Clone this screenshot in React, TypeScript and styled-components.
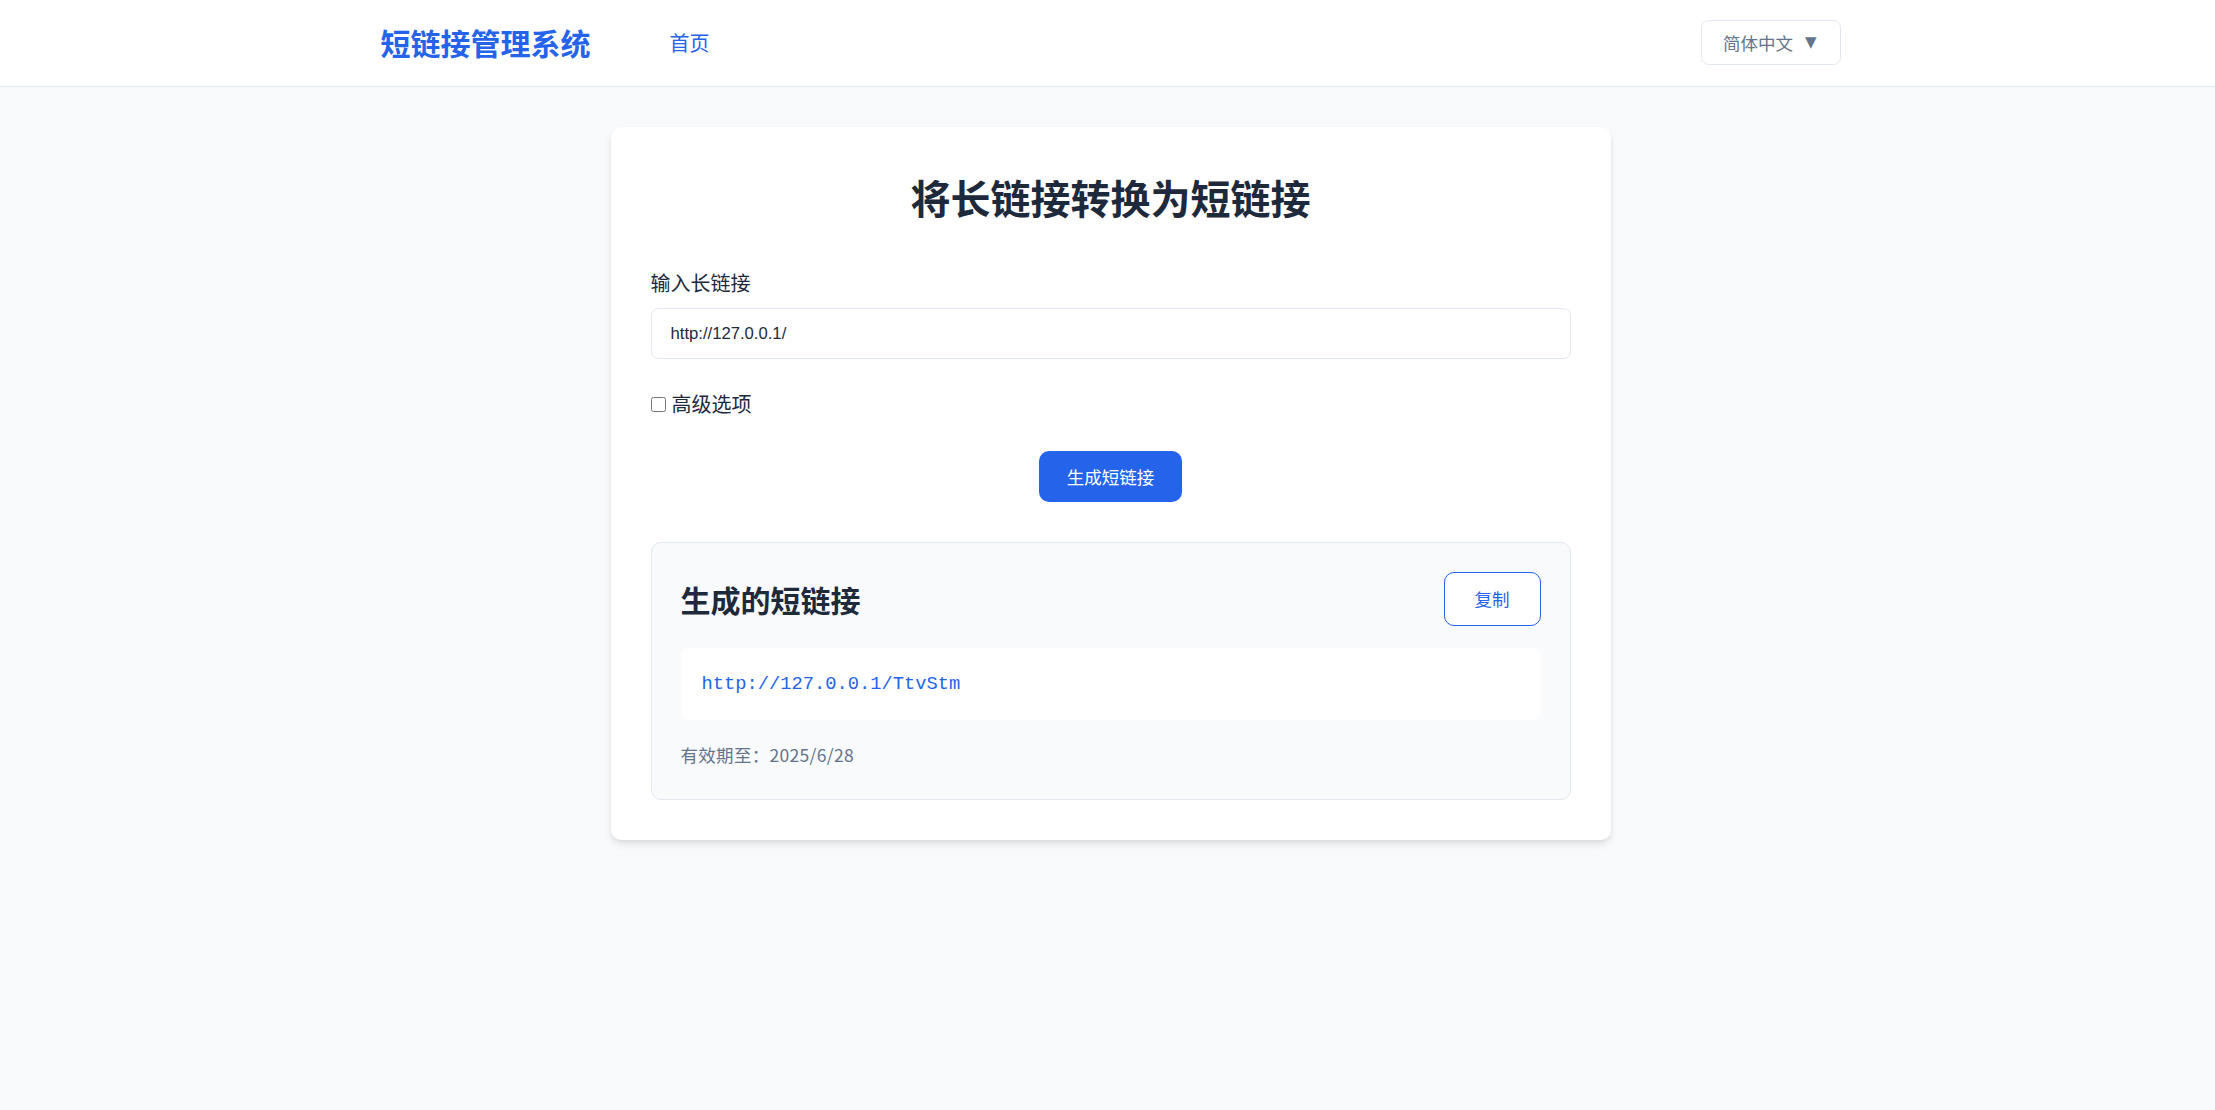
import React from "react";
import styled, { createGlobalStyle } from "styled-components";

const GlobalStyle = createGlobalStyle`
  html, body {
    margin: 0;
    padding: 0;
    background: #f8fafc;
    font-family: "Noto Sans CJK SC", "Noto Sans", sans-serif;
    color: #1e293b;
  }
  * { box-sizing: border-box; }
`;

const Page = styled.div`
  min-height: 100vh;
  background: #f8fafc;
`;

const Header = styled.header`
  background: #ffffff;
  border-bottom: 1px solid #e2e8f0;
`;

const HeaderInner = styled.div`
  max-width: 1466px;
  margin: 0 auto;
  padding: 20px 0 21px 6px;
  display: flex;
  align-items: center;
`;

const Logo = styled.div`
  font-size: 30px;
  font-weight: 700;
  line-height: 45px;
  color: #2563eb;
`;

const Nav = styled.nav`
  margin-left: 79px;
  display: flex;
  gap: 30px;
  flex: 1;
`;

const NavLink = styled.a`
  font-size: 20px;
  line-height: 30px;
  color: #2563eb;
  text-decoration: none;
  cursor: pointer;
`;

const LangButton = styled.button`
  height: 45px;
  padding: 0 23px 0 21px;
  display: flex;
  align-items: center;
  gap: 12px;
  background: #ffffff;
  border: 1px solid #e2e8f0;
  border-radius: 7.5px;
  font-family: "Noto Sans CJK SC", sans-serif;
  font-size: 17.5px;
  color: #64748b;
  cursor: pointer;
`;

const Caret = styled.span`
  font-family: "DejaVu Sans", sans-serif;
  font-size: 15px;
  line-height: 1;
  color: #64748b;
`;

const Main = styled.main`
  padding: 40px 0 60px 6px;
`;

const Card = styled.section`
  width: 1000px;
  margin: 0 auto;
  background: #ffffff;
  border-radius: 10px;
  padding: 40px;
  box-shadow: 0 5px 8px -1px rgba(0, 0, 0, 0.1), 0 2px 5px -1px rgba(0, 0, 0, 0.06);
`;

const Title = styled.h1`
  margin: 0 0 40px;
  font-size: 40px;
  font-weight: 700;
  line-height: 61px;
  text-align: center;
  color: #1e293b;
`;

const Label = styled.label`
  display: block;
  font-size: 20px;
  line-height: 30px;
  margin-bottom: 10px;
  color: #1e293b;
`;

const UrlInput = styled.input`
  display: block;
  width: 100%;
  height: 51px;
  padding: 0 19px;
  border: 1px solid #e2e8f0;
  border-radius: 7.5px;
  background: #ffffff;
  font-family: "Liberation Sans", Arial, sans-serif;
  font-size: 16.67px;
  color: #1e293b;
  outline: none;
`;

const CheckRow = styled.label`
  margin-top: 30px;
  display: flex;
  align-items: center;
  gap: 6px;
  font-size: 20px;
  line-height: 30px;
  color: #1e293b;
`;

const Check = styled.input`
  width: 15px;
  height: 15px;
  margin: 0;
`;

const Actions = styled.div`
  margin-top: 32px;
  display: flex;
  justify-content: center;
`;

const PrimaryButton = styled.button`
  height: 51px;
  padding: 0 28px;
  border: none;
  border-radius: 10px;
  background: #2563eb;
  color: #ffffff;
  font-family: "Noto Sans CJK SC", sans-serif;
  font-size: 17.5px;
  cursor: pointer;
`;

const ResultBox = styled.div`
  margin-top: 40px;
  background: #f8fafc;
  border: 1px solid #e2e8f0;
  border-radius: 10px;
  padding: 29px 29px 31px;
`;

const ResultHeader = styled.div`
  display: flex;
  align-items: center;
  justify-content: space-between;
`;

const ResultTitle = styled.h2`
  margin: 0;
  font-size: 30px;
  font-weight: 700;
  line-height: 1.2;
  color: #1e293b;
`;

const OutlineButton = styled.button`
  height: 53.5px;
  padding: 0 30px;
  border: 1px solid #2563eb;
  border-radius: 10px;
  background: #ffffff;
  color: #2563eb;
  font-family: "Noto Sans CJK SC", sans-serif;
  font-size: 17.5px;
  cursor: pointer;
`;

const ShortUrl = styled.div`
  margin-top: 22px;
  background: #ffffff;
  border-radius: 7.5px;
  padding: 20px 21px;
  font-family: "Liberation Mono", "Courier New", monospace;
  font-size: 18.75px;
  line-height: 32px;
  color: #2563eb;
`;

const Expiry = styled.div`
  margin-top: 22px;
  font-size: 17.5px;
  line-height: 26px;
  letter-spacing: 0.3px;
  color: #64748b;
`;

export default function App() {
  return (
    <Page>
      <GlobalStyle />
      <Header>
        <HeaderInner>
          <Logo>短链接管理系统</Logo>
          <Nav>
            <NavLink>首页</NavLink>
          </Nav>
          <LangButton>
            简体中文
            <Caret>▼</Caret>
          </LangButton>
        </HeaderInner>
      </Header>
      <Main>
        <Card>
          <Title>将长链接转换为短链接</Title>
          <Label htmlFor="long-url">输入长链接</Label>
          <UrlInput id="long-url" defaultValue="http://127.0.0.1/" />
          <CheckRow>
            <Check type="checkbox" />
            高级选项
          </CheckRow>
          <Actions>
            <PrimaryButton>生成短链接</PrimaryButton>
          </Actions>
          <ResultBox>
            <ResultHeader>
              <ResultTitle>生成的短链接</ResultTitle>
              <OutlineButton>复制</OutlineButton>
            </ResultHeader>
            <ShortUrl>http://127.0.0.1/TtvStm</ShortUrl>
            <Expiry>有效期至：2025/6/28</Expiry>
          </ResultBox>
        </Card>
      </Main>
    </Page>
  );
}
